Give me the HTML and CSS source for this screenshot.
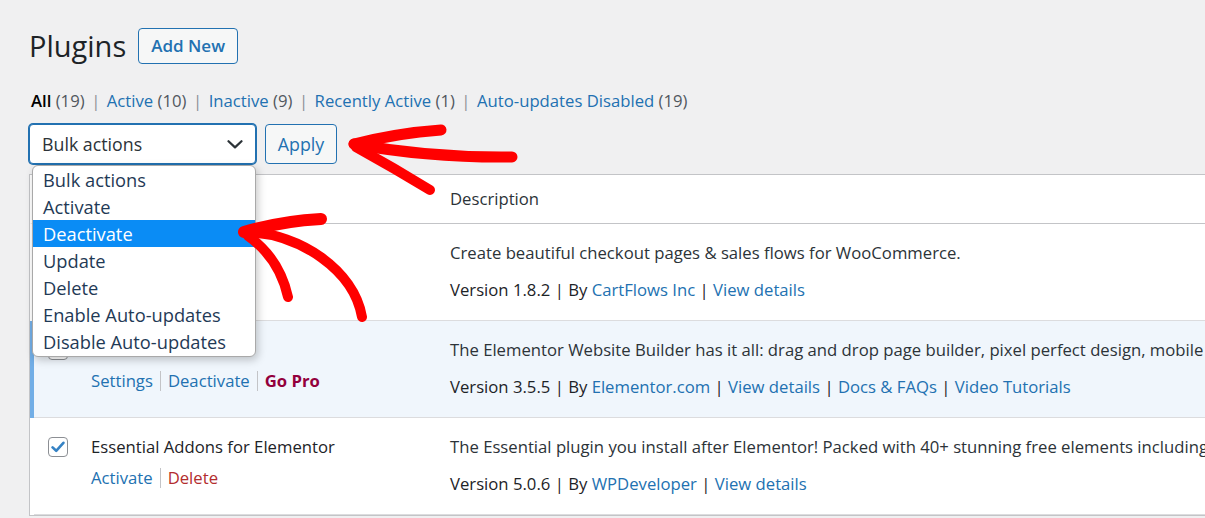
FILE: index.html
```html
<!DOCTYPE html>
<html lang="en">
<head>
<meta charset="utf-8">
<title>Plugins</title>
<link rel="stylesheet" href="styles.css">
</head>
<body>
<div class="wrap">
  <div class="page-head">
    <h1 class="title">Plugins</h1>
    <a class="btn add-new">Add New</a>
  </div>

  <ul class="subsubsub">
    <li><span class="current">All</span> <span class="count">(19)</span></li>
    <li class="sep">|</li>
    <li><a>Active <span class="count">(10)</span></a></li>
    <li class="sep">|</li>
    <li><a>Inactive <span class="count">(9)</span></a></li>
    <li class="sep">|</li>
    <li><a>Recently Active <span class="count">(1)</span></a></li>
    <li class="sep">|</li>
    <li><a>Auto-updates Disabled <span class="count">(19)</span></a></li>
  </ul>

  <div class="tablenav">
    <div class="select-wrap">
      <div class="select">
        <span>Bulk actions</span>
        <svg class="chev" width="16" height="9" viewBox="0 0 16 9"><path d="M1.5 1.2 L8 7.4 L14.5 1.2" fill="none" stroke="#2c3338" stroke-width="2.2" stroke-linecap="round" stroke-linejoin="round"/></svg>
      </div>
      <ul class="dropdown">
        <li>Bulk actions</li>
        <li>Activate</li>
        <li class="hl">Deactivate</li>
        <li>Update</li>
        <li>Delete</li>
        <li>Enable Auto-updates</li>
        <li>Disable Auto-updates</li>
      </ul>
    </div>
    <button class="btn apply">Apply</button>
  </div>

  <table class="plugins">
    <colgroup>
      <col class="c-check">
      <col class="c-name">
      <col class="c-desc">
    </colgroup>
    <thead>
      <tr>
        <th class="check"><span class="cb"></span></th>
        <th class="name">Plugin</th>
        <th class="desc">Description</th>
      </tr>
    </thead>
    <tbody>
      <tr>
        <td class="check"><span class="cb"></span></td>
        <td class="name">
          <div class="plugin-title">CartFlows</div>
          <div class="row-actions"><a>Activate</a><span class="rsep"></span><a class="delete">Delete</a></div>
        </td>
        <td class="desc">
          <p class="d1">Create beautiful checkout pages &amp; sales flows for WooCommerce.</p>
          <p class="d2">Version 1.8.2 | By <a>CartFlows Inc</a> | <a>View details</a></p>
        </td>
      </tr>
      <tr class="active">
        <td class="check"><span class="cb"></span></td>
        <td class="name">
          <div class="plugin-title"><strong>Elementor</strong></div>
          <div class="row-actions"><a>Settings</a><span class="rsep"></span><a>Deactivate</a><span class="rsep"></span><a class="gopro">Go Pro</a></div>
        </td>
        <td class="desc">
          <p class="d1">The Elementor Website Builder has it all: drag and drop page builder, pixel perfect design, mobile</p>
          <p class="d2">Version 3.5.5 | By <a>Elementor.com</a> | <a>View details</a> | <a>Docs &amp; FAQs</a> | <a>Video Tutorials</a></p>
        </td>
      </tr>
      <tr>
        <td class="check"><span class="cb checked"><svg width="14" height="12" viewBox="0 0 14 12"><path d="M1.6 6.4 L5.2 9.8 L12.4 1.8" fill="none" stroke="#3582c4" stroke-width="2.6" stroke-linecap="round" stroke-linejoin="round"/></svg></span></td>
        <td class="name">
          <div class="plugin-title">Essential Addons for Elementor</div>
          <div class="row-actions"><a>Activate</a><span class="rsep"></span><a class="delete">Delete</a></div>
        </td>
        <td class="desc">
          <p class="d1">The Essential plugin you install after Elementor! Packed with 40+ stunning free elements including</p>
          <p class="d2">Version 5.0.6 | By <a>WPDeveloper</a> | <a>View details</a></p>
        </td>
      </tr>
    </tbody>
  </table>
</div>

<svg class="annot" width="1205" height="518" viewBox="0 0 1205 518">
  <g fill="none" stroke="#ff0000" stroke-linecap="round" stroke-linejoin="round">
    <path d="M354 144 Q 430 158 512 157" stroke-width="11"/>
    <path d="M354 144 Q 398 133 441 130" stroke-width="11"/>
    <path d="M356 147 Q 394 168 430 190" stroke-width="10"/>
    <path d="M244 232 Q 282 221 321 219" stroke-width="12"/>
    <path d="M248 236 C 268 250 282 270 288 297" stroke-width="10"/>
    <path d="M248 232 C 300 234 354 270 362 317" stroke-width="10"/>
  </g>
</svg>
</body>
</html>
```

FILE: styles.css
```css
html, body {
  margin: 0;
  height: 100%;
  overflow: hidden;
}

body {
  position: relative;
  background: #f0f0f1;
  font-family: "Open Sans", "Noto Sans", sans-serif;
  font-size: 16.7px;
  line-height: 26px;
  color: #2c3338;
}

a {
  color: #2271b1;
  text-decoration: none;
}

.wrap {
  width: 1420px;
  padding: 28px 0 0 29px;
}

/* Heading */
.page-head {
  display: flex;
  align-items: center;
  gap: 12px;
  height: 36px;
}

.title {
  margin: 0;
  font-size: 29px;
  font-weight: 400;
  line-height: 36px;
  color: #1d2327;
}

.btn {
  display: inline-flex;
  align-items: center;
  box-sizing: border-box;
  height: 36px;
  padding: 0 12px;
  border: 1px solid #2271b1;
  border-radius: 4px;
  background: #f6f7f7;
  color: #2271b1;
  font-family: inherit;
  font-size: 17px;
}

.add-new {
  font-weight: 600;
}

/* Filter links */
.subsubsub {
  display: flex;
  align-items: center;
  gap: 6.5px;
  margin: 24px 0 0 2px;
  padding: 0;
  list-style: none;
  line-height: 26px;
}

.subsubsub .current {
  color: #000;
  font-weight: 600;
}

.subsubsub .count {
  color: #50575e;
}

.subsubsub .sep {
  color: #8c8f94;
}

/* Bulk actions */
.tablenav {
  display: flex;
  align-items: center;
  gap: 9px;
  margin-top: 10px;
  height: 40px;
}

.select-wrap {
  position: relative;
}

.select {
  display: flex;
  align-items: center;
  justify-content: space-between;
  box-sizing: border-box;
  width: 227px;
  height: 40px;
  padding: 0 12px;
  border: 1px solid #2271b1;
  border-radius: 4px;
  box-shadow: 0 0 0 1px #2271b1;
  background: #fff;
  color: #2c3338;
  font-size: 17.8px;
}

.apply {
  width: 72px;
  height: 40px;
  justify-content: center;
  padding: 0;
  font-size: 17.8px;
}

.dropdown {
  position: absolute;
  top: 41px;
  left: 3px;
  z-index: 5;
  box-sizing: border-box;
  width: 224px;
  margin: 0;
  padding: 0 0 1px;
  list-style: none;
  background: #fff;
  border: 1px solid #a9a9a9;
  border-radius: 6px;
  box-shadow: 2px 3px 8px rgba(0, 0, 0, 0.22);
  overflow: hidden;
  color: #1f3a56;
  font-size: 18.3px;
}

.dropdown li {
  height: 27px;
  line-height: 27px;
  padding-left: 10px;
  white-space: nowrap;
}

.dropdown li.hl {
  background: #0a8cf5;
  color: #fff;
}

/* Table */
.plugins {
  margin-top: 10px;
  width: 1400px;
  table-layout: fixed;
  border-collapse: separate;
  border-spacing: 0;
  border: 1px solid #c3c4c7;
  background: #fff;
}

.c-check { width: 48px; }
.c-name { width: 359px; }

.plugins th {
  padding: 11px 13px 11px;
  text-align: left;
  font-weight: 400;
  color: #2c3338;
  border-bottom: 1px solid #c3c4c7;
}

.plugins td {
  vertical-align: top;
  padding: 16px 13px 18px;
  box-shadow: inset 0 -1px 0 #dcdcde;
}

.plugins .check {
  padding-left: 14px;
  padding-right: 0;
  border-left: 4px solid transparent;
}

.plugins th.check {
  padding-top: 14px;
}

.plugins td.check {
  padding-top: 19px;
}

.plugins tr.active td {
  background: #f0f6fc;
}

.plugins tr.active td.check {
  border-left-color: #72aee6;
}

.cb {
  display: flex;
  align-items: center;
  justify-content: center;
  box-sizing: border-box;
  width: 20px;
  height: 20px;
  border: 1px solid #8c8f94;
  border-radius: 4px;
  background: #fff;
}

.plugin-title {
  color: #1d2327;
  margin-bottom: 5px;
}

.plugin-title strong {
  font-weight: 600;
}

.row-actions {
  display: flex;
  align-items: center;
  gap: 7px;
}

.rsep {
  width: 1px;
  height: 20px;
  background: #c3c4c7;
}

.delete {
  color: #b32d2e;
}

.gopro {
  color: #93003c;
  font-weight: 700;
}

.desc p {
  margin: 0;
  white-space: nowrap;
}

.desc .d1 {
  margin-bottom: 11px;
}

.desc .d2 {
  color: #1d2327;
}

/* Annotation arrows */
.annot {
  position: absolute;
  top: 0;
  left: 0;
  z-index: 10;
  pointer-events: none;
}
```
